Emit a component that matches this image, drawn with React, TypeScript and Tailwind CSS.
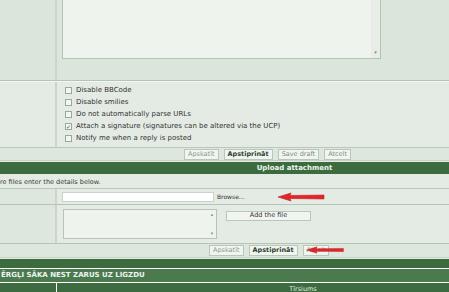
import React from "react";

const font = { fontFamily: '"DejaVu Sans", Verdana, sans-serif' };

function Btn({ label, bold, muted }: { label: string; bold?: boolean; muted?: boolean }) {
  return (
    <span
      className={`inline-flex h-[11px] items-center border border-[#b8c8b8] bg-[#f1f5f1] px-[3px] text-[6.5px] leading-none ${
        bold ? "font-bold text-[#2f3f2f]" : muted ? "text-[#8a9a8a]" : "text-[#7d8d7d]"
      }`}
    >
      {label}
    </span>
  );
}

function Arrow({ className }: { className?: string }) {
  return (
    <svg className={className} width="48" height="10" viewBox="0 0 48 10">
      <path d="M1 5 L14 1 L13 3.5 L47 3 L47 7 L13 6.5 L14 9 Z" fill="#e0262b" stroke="#c81e22" strokeWidth="0.6" />
    </svg>
  );
}

function Check({ checked }: { checked?: boolean }) {
  return (
    <span className="flex h-[7px] w-[7px] items-center justify-center border border-[#9aa89a] bg-[#f4f6f4] text-[6px] leading-none text-[#3a4a6a]">
      {checked ? "✓" : ""}
    </span>
  );
}

export default function App() {
  return (
    <div className="h-[292px] w-[449px] overflow-hidden bg-[#e4ebe4]" style={font}>
      {/* message row */}
      <div className="flex h-[81px] border-b border-[#b3c5b3]">
        <div className="w-[57px] border-r-2 border-[#c9d6c9] bg-[#dbe5db]" />
        <div className="flex-1 bg-[#dbe5db] pl-[5px]">
          <div className="flex h-[59px] w-[319px] border border-t-0 border-[#b3c4b3] bg-[#eef3ee]">
            <div className="flex-1" />
            <div className="flex w-[9px] flex-col items-center justify-end bg-[#e8ede8] pb-[3px]">
              <span className="text-[5px] leading-none text-[#7a8a7a]">▾</span>
            </div>
          </div>
        </div>
      </div>

      {/* options row */}
      <div className="flex h-[67px] border-b border-t border-t-[#f2f6f2] border-b-[#b8c9b8]">
        <div className="w-[57px] border-r-2 border-[#c9d6c9] bg-[#e4ebe4]" />
        <div className="flex flex-1 flex-col gap-[5px] bg-[#e4ebe4] pl-[8px] pt-[5px] text-[7px] leading-[7px] text-[#333]">
          <div className="flex items-center gap-[4px]"><Check />Disable BBCode</div>
          <div className="flex items-center gap-[4px]"><Check />Disable smilies</div>
          <div className="flex items-center gap-[4px]"><Check />Do not automatically parse URLs</div>
          <div className="flex items-center gap-[4px]"><Check checked />Attach a signature (signatures can be altered via the UCP)</div>
          <div className="flex items-center gap-[4px]"><Check />Notify me when a reply is posted</div>
        </div>
      </div>

      {/* buttons */}
      <div className="flex h-[13px] items-center justify-center gap-[5px] border-b border-[#c5d4c5] bg-[#dde7dd] pl-[86px]">
        <Btn label="Apskatīt" muted />
        <Btn label="Apstiprināt" bold />
        <Btn label="Save draft" />
        <Btn label="Atcelt" />
      </div>

      {/* upload header */}
      <div className="mt-[1px] flex h-[12px] items-center justify-center bg-[#3d6b40] pl-[140px] text-[7px] font-bold text-[#eef5ee]">
        Upload attachment
      </div>

      <div className="flex h-[15px] items-end border-b border-[#b8c9b8] bg-[#e4ebe4] pb-[3px]">
        <span className="text-[6.5px] leading-none text-[#2f3f2f]">re files enter the details below.</span>
      </div>

      {/* file row */}
      <div className="flex h-[16px] border-b border-[#b3c5b3]">
        <div className="w-[57px] border-r-2 border-[#c9d6c9] bg-[#dde7dd]" />
        <div className="flex flex-1 items-center bg-[#e4ebe4] pl-[5px]">
          <div className="h-[10px] w-[152px] border border-[#c8d4c8] bg-white" />
          <span className="ml-[3px] text-[6px] text-[#333]">Browse...</span>
          <Arrow className="ml-[32px]" />
        </div>
      </div>

      {/* comment row */}
      <div className="flex h-[39px] border-b border-[#b3c5b3]">
        <div className="w-[57px] border-r-2 border-[#c9d6c9] bg-[#dde7dd]" />
        <div className="flex flex-1 bg-[#e4ebe4] pl-[6px] pt-[4px]">
          <div className="flex h-[30px] w-[154px] border border-[#b5c5b5] bg-[#eef3ee]">
            <div className="flex-1" />
            <div className="flex w-[8px] flex-col items-center justify-between py-[2px] text-[5px] leading-none text-[#8a9a8a]">
              <span>▴</span>
              <span>▾</span>
            </div>
          </div>
          <div className="ml-[9px] mt-[2px] flex h-[10px] w-[85px] items-center justify-center border border-[#b8c8b8] bg-[#f1f5f1] text-[6.5px] text-[#333]">
            Add the file
          </div>
        </div>
      </div>

      {/* buttons 2 */}
      <div className="relative flex h-[14px] items-center gap-[5px] border-b border-[#c5d4c5] bg-[#dde7dd] pl-[209px]">
        <Btn label="Apskatīt" muted />
        <Btn label="Apstiprināt" bold />
        <Btn label="Atcelt" muted />
        <Arrow className="absolute left-[304px] top-[2px] h-[8px] w-[42px]" />
      </div>

      <div className="mt-[1px] h-[9px] bg-[#3d6b40]" />
      <div className="h-[1px] bg-white" />
      <div className="flex h-[13px] items-center bg-[#4b7a4e] pl-[1px] text-[7px] font-bold text-[#eef5ee]">
        <span>ĒRGĻI SĀKA NEST ZARUS UZ LIGZDU</span>
      </div>
      <div className="h-[1px] bg-white" />
      <div className="flex h-[20px] bg-[#3d6b40]">
        <div className="w-[57px] border-r border-white" />
        <div className="flex flex-1 justify-center pl-[100px] pt-[2px] text-[6.5px] text-[#dfe9df]">Tīrsiums</div>
      </div>
    </div>
  );
}
